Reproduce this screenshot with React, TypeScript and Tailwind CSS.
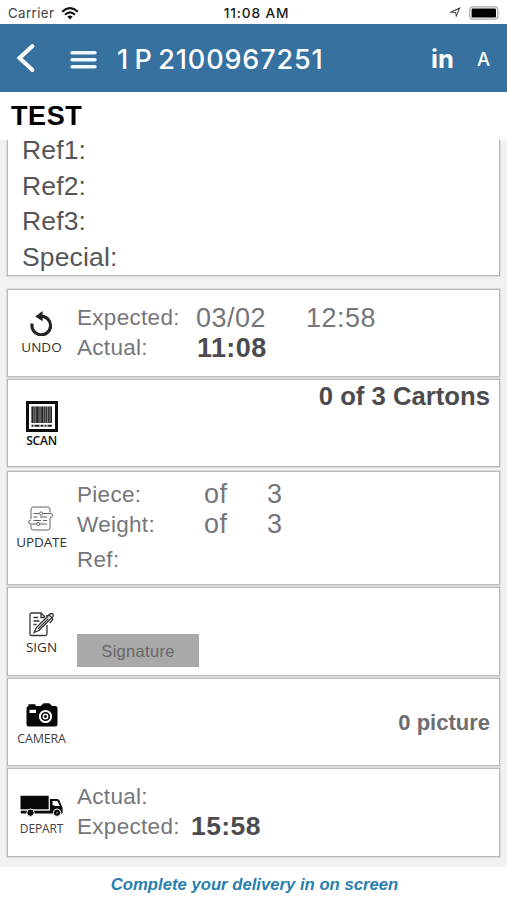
import type { ReactNode } from "react";

const CARD = "flex bg-white border border-[#bababd] shadow-[0_0_0_1px_#dcdcdf]";
const LABEL = "text-[22.5px] tracking-[0.3px] text-[#75767a]";
const VALUE = "text-[27px] tracking-[0.5px] text-[#75767a]";
const STRONG = "text-[27px] tracking-[0.4px] font-bold text-[#4c4c4e]";

function Action({ icon, label, className }: { icon: ReactNode; label: string; className: string }) {
  return (
    <div className="w-[67px] shrink-0 flex flex-col items-center">
      <div className={`${ACTION} ${className}`}>
        {icon}
        <span className="whitespace-nowrap">{label}</span>
      </div>
    </div>
  );
}

const ACTION = "flex flex-col items-center font-['Open_Sans',sans-serif] leading-[18px]";

function UndoIcon() {
  return (
    <svg width="24" height="25" viewBox="0 0 24 25" fill="none">
      <path d="M2.200 12.500A9.300 9.300 0 1 0 11 5.300" stroke="#242424" strokeWidth="3.200" />
      <path d="M5.200 5.500 12.600 0v10.300Z" fill="#242424" />
    </svg>
  );
}

function BarcodeIcon() {
  const bars = [
    [5.5, 2], [8.4, 1], [10.2, 2.4], [13.5, 1], [15.3, 2], [18.2, 1.2], [20.2, 1], [22.2, 1.4], [24.5, 1.5],
  ];
  return (
    <svg width="32" height="31" viewBox="0 0 32 31">
      <rect x="1.5" y="1.5" width="29" height="28" fill="white" stroke="#0b0b0b" strokeWidth="3" />
      <rect x="5.500" y="5.500" width="20.500" height="16.500" fill="#999" />
      {bars.map(([x, w]) => (
        <rect key={x} x={x} y="5.5" width={w} height="16.5" fill="#222" />
      ))}
      <path d="M5.5 24.7H26" stroke="#222" strokeWidth="2" strokeDasharray="2 1 5 1 3 1" />
    </svg>
  );
}

function UpdateIcon() {
  return (
    <svg width="26" height="25" viewBox="0 0 26 25" fill="none" stroke="#606164" strokeWidth="1">
      <path d="M3 13V3.500Q3 1 5.500 1h14Q22 1 22 3.500V6.500M22 12v9.500Q22 24 19.500 24h-14Q3 24 3 21.500V18.500" />
      <path d="M5.500 7.500H11.500M15 7.500H22M5.500 11h4M12 11h7M5.500 14.500H13M15 14.500h4M3 18H8.500M12 18h7" />
      <circle cx="13.200" cy="7.500" r="1.600" />
      <circle cx="10.200" cy="18" r="1.600" />
      <path d="M22 7.500q2.500 0 2.500 2t-2.500 2M3 18q-2.300 0-2.300-2t2.300-2" />
    </svg>
  );
}

function SignIcon() {
  return (
    <svg width="25" height="25" viewBox="0 0 25 25" fill="none" stroke="#38383a" strokeWidth="1.3">
      <path d="M18 13v9q0 1.500-1.500 1.500h-14Q1 23.500 1 22V2.500Q1 1 2.500 1H12l4 4M12 1v4.500h3.500" />
      <path d="M4.500 5.500H9M4.500 9h6M4.500 12.500h3" />
      <path d="M7.500 15.500 20 3l2.800 2.800L10.300 18.300 5 20.500Z" fill="white" />
      <path d="M9 17 19.500 6.500M20 3q1-1.500 2.500-1.500 1.800.2 1.800 2 0 1-1.500 2.300M23 6l.8 1.500-3 3.500M19.500 3.500 17 4" />
    </svg>
  );
}

function CameraIcon() {
  return (
    <svg width="32" height="24" viewBox="0 0 32 24">
      <path
        d="M2.500 3V1.300h7V3h5.200l2.200-2.200q.4-.5 1-.5h5q.6 0 1 .5L26 3h3q2.500 0 2.500 2.500v15.500q0 2.500-2.500 2.500H3Q.5 23.500.5 21V5.500Q.5 3.400 2.500 3Z"
        fill="#050505"
      />
      <rect x="3.500" y="6.800" width="6.500" height="3.200" fill="white" />
      <circle cx="19.500" cy="13.500" r="5.600" fill="#050505" stroke="white" strokeWidth="2" />
      <circle cx="19.500" cy="13.500" r="2.200" fill="#050505" stroke="white" strokeWidth="1.500" />
    </svg>
  );
}

function TruckIcon() {
  return (
    <svg width="43" height="22" viewBox="0 0 43 22">
      <path d="M.5.700h28.300v13.800H.5ZM.8 15.500h29V4h7.500q1.500 0 2.200 1.500l2.300 5.500q.8 1.200.8 2.500v5H.8Z" fill="#090909" />
      <path d="M32.500 6h4.300q.7 0 1 .7l2 4.300h-4.300l-3-1Z" fill="white" />
      <path d="M29.300 1v14M.5 15h29" stroke="white" strokeWidth=".8" />
      <circle cx="10.500" cy="17.700" r="3.700" fill="#090909" stroke="white" />
      <circle cx="37" cy="17.700" r="3.700" fill="#090909" stroke="white" />
      <circle cx="37" cy="17.700" r="1" fill="#777" />
    </svg>
  );
}

function StatusBar() {
  return (
    <div className="h-6 grid grid-cols-3 items-center bg-white font-['Inter',sans-serif] text-[13.3px] text-[#1c1c1c]">
      <div className="flex items-center gap-[7px] pl-2 pt-[3px]">
        <span className="tracking-[0.4px] text-[#414141]">Carrier</span>
        <svg width="18" height="13" viewBox="0 0 18 13" fill="none" stroke="#111" strokeWidth="2.200">
          <path d="M1.200 4.800Q9-2.500 16.800 4.800M4 7.700q5-4.500 10 0" />
          <path d="M6.300 9.600q2.700-2.100 5.400 0L9 12.500Z" fill="#111" stroke="none" />
        </svg>
      </div>
      <div className="text-center text-[13.700px] font-medium tracking-[0.85px] pt-[3px] pl-[6px] whitespace-nowrap">11:08 AM</div>
      <div className="flex items-center justify-end gap-[8px] pr-[6px] pt-px">
        <svg width="12" height="11" viewBox="0 0 12 11" fill="#333">
          <path fillRule="evenodd" d="M0 5.500 11.500 0 7 10.800 6.300 5.800ZM3.500 5.100 7 5.100 7.500 7.500 9.500 2.200Z" />
        </svg>
        <svg width="32" height="14" viewBox="0 0 32 14">
          <rect x=".8" y=".8" width="28" height="12.400" rx="3" fill="white" stroke="#a5a5a5" strokeWidth="1.200" />
          <rect x="2.600" y="2.600" width="24.400" height="8.800" rx="1.200" fill="#000" />
          <path d="M30.200 5q1.500 2 0 4Z" fill="#a5a5a5" />
        </svg>
      </div>
    </div>
  );
}

export default function App() {
  return (
    <div className="w-[507px] h-[900px] overflow-hidden flex flex-col bg-white font-['Liberation_Sans',Arial,sans-serif]">
      <StatusBar />
      <header className="h-[68px] shrink-0 flex items-center bg-[#37719f] text-white font-['Inter',sans-serif] pl-4 pr-[17px]">
        <svg width="20" height="30" viewBox="0 0 20 30" fill="none" stroke="white" strokeWidth="4">
          <path d="M16.500 3 3.500 15 16.500 27" strokeLinecap="round" />
        </svg>
        <svg className="ml-[34px] mt-[3px]" width="27" height="20" viewBox="0 0 27 20" stroke="#eff8ff" strokeWidth="3.400" strokeLinecap="round">
          <path d="M2 2.700h23M2 9.700h23M2 16.700h23" />
        </svg>
        <h1 className="ml-5 mt-[3px] text-[27px] leading-8 tracking-[0.85px] [word-spacing:-2.5px] font-medium whitespace-nowrap">1 P 2100967251</h1>
        <span className="ml-auto mt-[1px] text-[25.500px] leading-8 font-bold">in</span>
        <span className="ml-[23px] mt-[3px] text-[18.500px] font-medium">A</span>
      </header>
      <div className="h-12 shrink-0 pl-[11px] text-[27px] leading-[48px] tracking-[0.6px] font-bold text-black">TEST</div>
      <main className="h-[727px] shrink-0 overflow-hidden bg-[#f2f2f5] pl-[7px] pr-[7px] flex flex-col">
        <section className="h-[136px] shrink-0 overflow-hidden border border-t-0 border-[#bababd] shadow-[0_0_0_1px_#dcdcdf] bg-white pl-[14px] text-[26.500px] tracking-[0.15px] leading-[35.500px] text-[#565658]">
          <div className="-mt-[7px]">Ref1:</div>
          <div>Ref2:</div>
          <div>Ref3:</div>
          <div>Special:</div>
        </section>

        <section className={`${CARD} h-[88px] shrink-0 mt-[13px]`}>
          <Action icon={<UndoIcon />} label="UNDO" className="pt-[21px] gap-[2px] text-[13.500px] text-[#303030]" />
          <div className="pl-[2px] pt-[13px] leading-[29.500px] whitespace-nowrap">
            <div className="flex h-[29.500px]">
              <span className={`${LABEL} w-[119px]`}>Expected:</span>
              <span className={`${VALUE} w-[110px] pt-px`}>03/02</span>
              <span className={`${VALUE} pt-px`}>12:58</span>
            </div>
            <div className="flex h-[29.500px]">
              <span className={`${LABEL} w-[120px]`}>Actual:</span>
              <span className={`${STRONG} pt-px`}>11:08</span>
            </div>
          </div>
        </section>

        <section className={`${CARD} h-[88px] shrink-0 mt-[2px]`}>
          <Action icon={<BarcodeIcon />} label="SCAN" className="pt-[21px] text-[12px] tracking-[-0.2px] font-semibold text-[#101010]" />
          <div className="ml-auto pr-[9px] text-[25.700px] leading-[32px] font-bold text-[#4c4c4e]">0 of 3 Cartons</div>
        </section>

        <section className={`${CARD} h-[114px] shrink-0 mt-[4px]`}>
          <Action icon={<UpdateIcon />} label="UPDATE" className="pt-[34px] gap-[2px] text-[13.500px] tracking-[-0.1px] text-[#303030]" />
          <div className="pl-[2px] pt-[8px] leading-[29.500px] whitespace-nowrap">
            <div className="flex h-[29.500px]">
              <span className={`${LABEL} w-[127px]`}>Piece:</span>
              <span className={`${VALUE} w-[63px]`}>of</span>
              <span className={VALUE}>3</span>
            </div>
            <div className="flex h-[29.500px]">
              <span className={`${LABEL} w-[127px]`}>Weight:</span>
              <span className={`${VALUE} w-[63px]`}>of</span>
              <span className={VALUE}>3</span>
            </div>
            <div className={`${LABEL} mt-[6px]`}>Ref:</div>
          </div>
        </section>

        <section className={`${CARD} h-[89px] shrink-0 mt-[2px]`}>
          <Action icon={<SignIcon />} label="SIGN" className="pt-[24px] gap-[1px] text-[13.500px] text-[#303030]" />
          <button className="ml-[2px] mt-[46px] w-[122px] h-[33px] bg-[#a9a9a9] text-[16.500px] text-[#666668] leading-[34px] tracking-[0.3px]">Signature</button>
        </section>

        <section className={`${CARD} h-[88px] shrink-0 mt-[2px]`}>
          <Action icon={<CameraIcon />} label="CAMERA" className="pt-[24px] gap-[3px] text-[12.500px] tracking-[-0.15px] text-[#404040]" />
          <div className="ml-auto pr-[9px] text-[22px] leading-[87px] font-bold text-[#6d6d70]">0 picture</div>
        </section>

        <section className={`${CARD} h-[89px] shrink-0 mt-[2px]`}>
          <Action icon={<TruckIcon />} label="DEPART" className="pt-[26px] gap-[3px] text-[12px] tracking-[-0.15px] text-[#404040]" />
          <div className="pl-[2px] pt-[13px] leading-[29.500px] whitespace-nowrap">
            <div className={`${LABEL} h-[29.500px]`}>Actual:</div>
            <div className="flex h-[29.500px]">
              <span className={`${LABEL} w-[114px]`}>Expected:</span>
              <span className="text-[26.500px] tracking-[0.4px] font-bold text-[#4c4c4e]">15:58</span>
            </div>
          </div>
        </section>
      </main>
      <footer className="h-[33px] pl-[2px] text-center text-[16.700px] leading-[35px] font-bold italic text-[#2a7fae] whitespace-nowrap">
        Complete your delivery in on screen
      </footer>
    </div>
  );
}
